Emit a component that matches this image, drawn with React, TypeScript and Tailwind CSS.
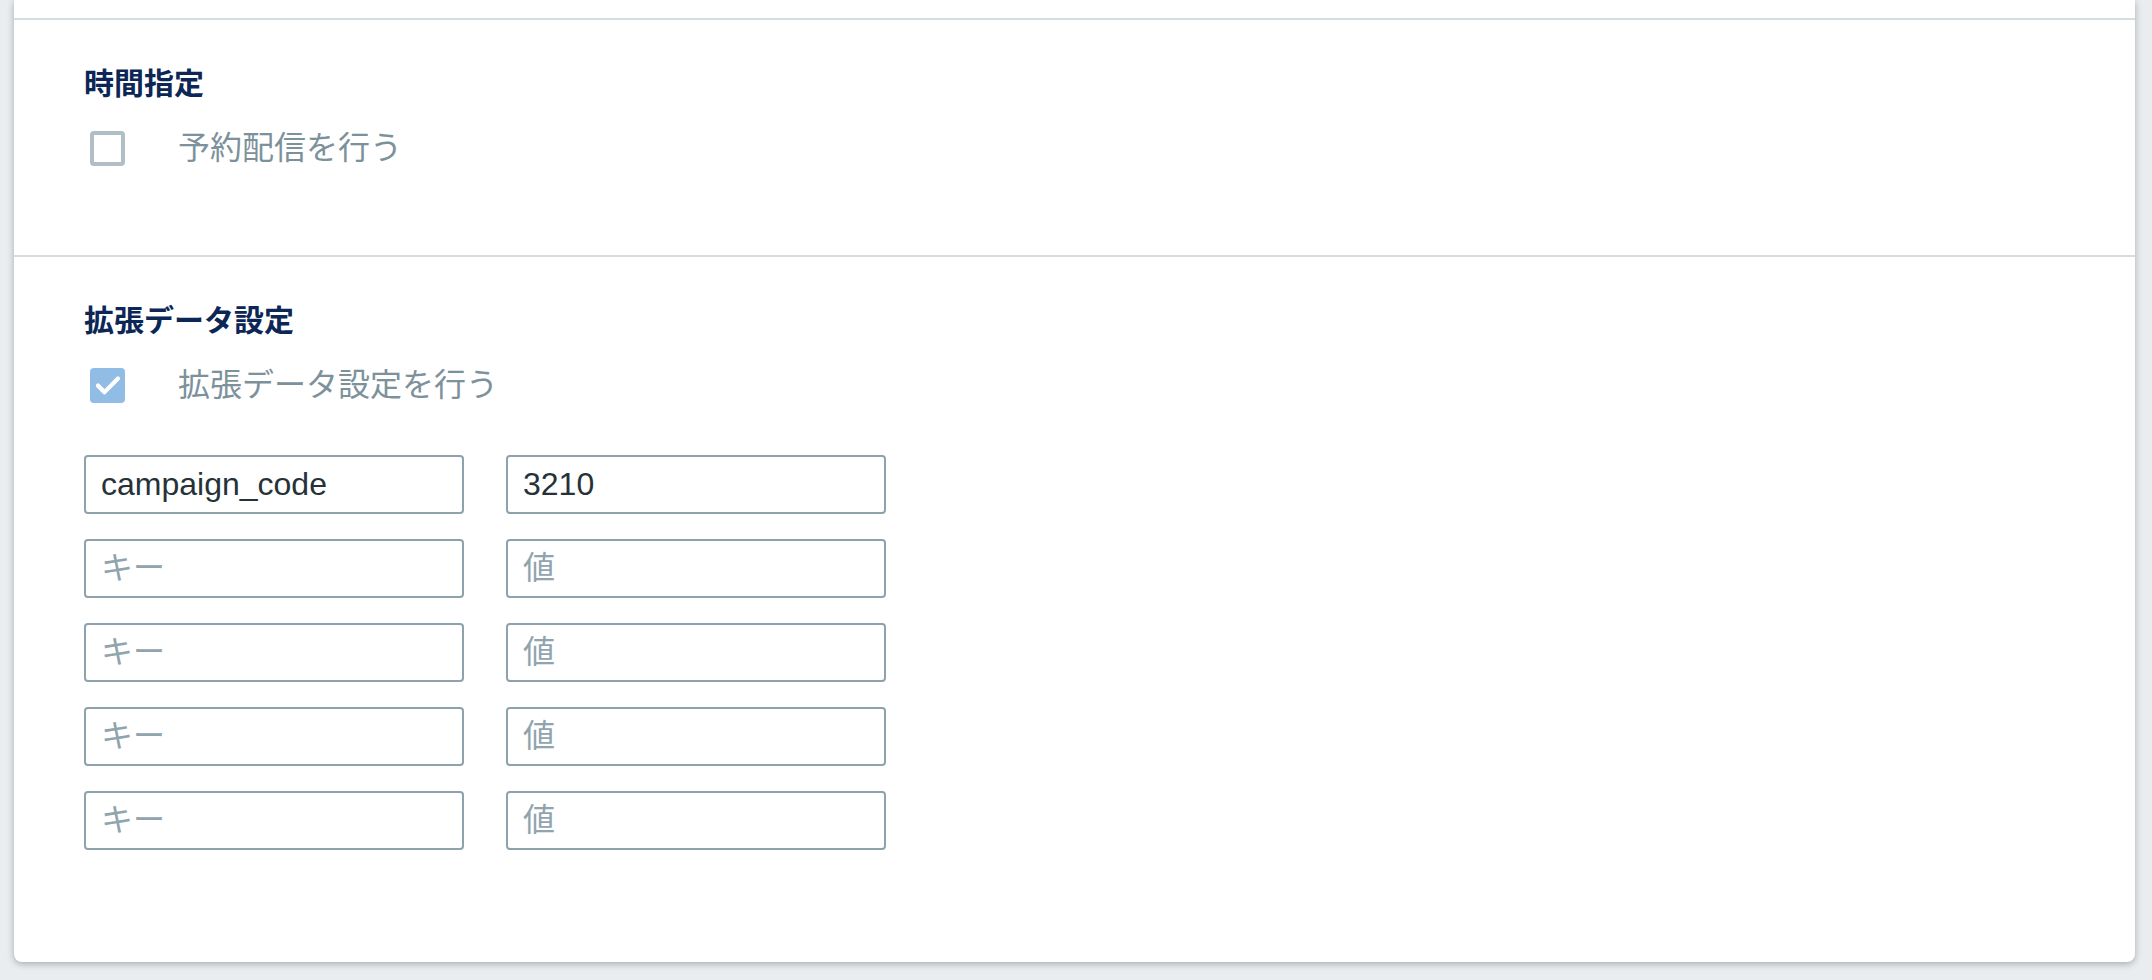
import React from "react";

const jp = { fontFamily: '"Liberation Sans", "Noto Sans CJK JP", sans-serif' };

const Checkbox = ({ checked }: { checked: boolean }) =>
  checked ? (
    <span className="flex h-[35px] w-[35px] items-center justify-center rounded-[4px] bg-[#90bce6]">
      <svg viewBox="0 0 24 24" className="h-[30px] w-[30px]" fill="none">
        <path d="M4 12.5l5.2 5.2L20 6.8" stroke="#ffffff" strokeWidth="3.4" strokeLinecap="round" strokeLinejoin="round" />
      </svg>
    </span>
  ) : (
    <span className="block h-[35px] w-[35px] rounded-[4px] border-[4px] border-[#b0bec5] bg-white" />
  );

const Field = ({ value, placeholder }: { value?: string; placeholder: string }) => (
  <input
    readOnly
    value={value ?? ""}
    placeholder={placeholder}
    className="h-[59px] w-[380px] rounded-[4px] border-2 border-[#8ea2ac] bg-white px-[15px] text-[32px] text-[#263238] outline-none placeholder:text-[#90a4ae]"
    style={jp}
  />
);

const Section = ({
  title,
  label,
  checked,
  children,
}: {
  title: string;
  label: string;
  checked: boolean;
  children?: React.ReactNode;
}) => (
  <section className="px-[70px] pt-[44px]">
    <h2 className="text-[30px] font-bold leading-[40px] text-[#0c2756]">{title}</h2>
    <label className="mt-[20px] flex h-[48px] items-center gap-[53px] pl-[6px]">
      <Checkbox checked={checked} />
      <span className="text-[32px] text-[#7d919b]">{label}</span>
    </label>
    {children}
  </section>
);

const rows = [
  { key: "campaign_code", value: "3210" },
  { key: "", value: "" },
  { key: "", value: "" },
  { key: "", value: "" },
  { key: "", value: "" },
];

export default function App() {
  return (
    <div className="h-[980px] overflow-hidden bg-[#e9edf0] pl-[14px] pr-[17px]" style={jp}>
      <div className="rounded-b-[8px] bg-white shadow-[0_2px_7px_rgba(0,0,0,0.28)]">
        <div className="h-[20px] border-b-2 border-[#d5dde0]" />
        <div className="h-[237px] border-b-2 border-[#d5dde0]">
          <Section title="時間指定" label="予約配信を行う" checked={false} />
        </div>
        <div className="pb-[112px]">
          <Section title="拡張データ設定" label="拡張データ設定を行う" checked>
            <div className="mt-[46px] flex flex-col gap-[25px]">
              {rows.map((r, i) => (
                <div key={i} className="flex gap-[42px]">
                  <Field value={r.key} placeholder="キー" />
                  <Field value={r.value} placeholder="値" />
                </div>
              ))}
            </div>
          </Section>
        </div>
      </div>
    </div>
  );
}
